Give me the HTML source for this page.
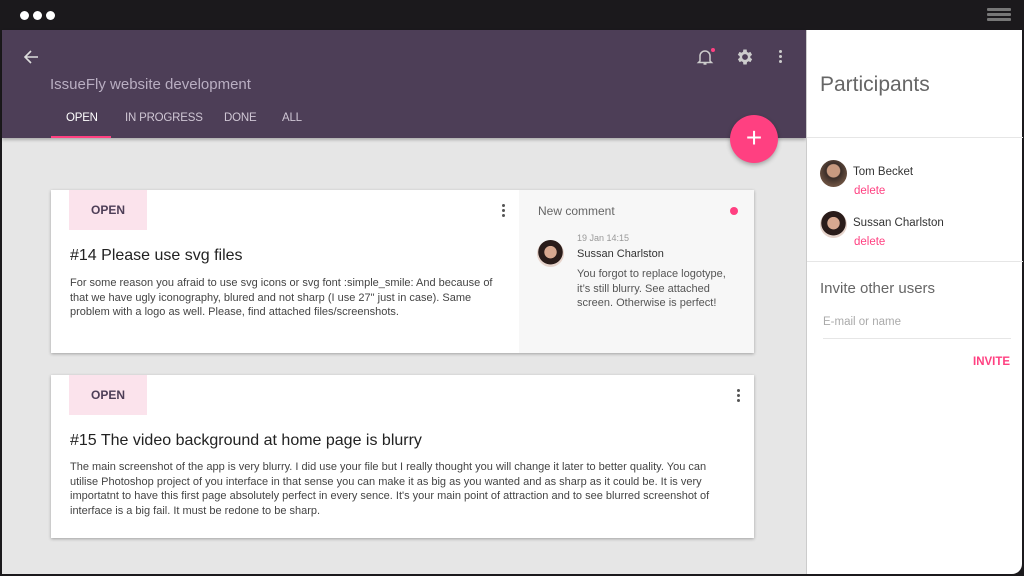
<!DOCTYPE html>
<html><head><style>
*{margin:0;padding:0;box-sizing:border-box}
body{width:1024px;height:576px;overflow:hidden;background:#1b191c;font-family:"Liberation Sans",sans-serif;position:relative}
.abs{position:absolute}
.main{left:2px;top:30px;width:804px;height:544px;background:#e6e6e6}
.hdr{left:2px;top:30px;width:804px;height:108px;background:#4d3e57;box-shadow:0 2px 3px rgba(0,0,0,.25)}
.side{left:806px;top:30px;width:216px;height:544px;background:#fff;border-left:1px solid #ccc;border-radius:0 0 10px 0}
.card{background:#fff;box-shadow:0 1px 3px rgba(0,0,0,.3);left:51px;width:703px;height:163px}
.tag{left:18px;top:0;width:78px;height:40px;background:#fbe3ec;color:#4d3e57;font-weight:bold;font-size:12px;line-height:40px;text-align:center}
.title{left:19px;font-size:16px;color:#222}
.txt{left:19px;font-size:11px;color:#444;line-height:14.5px}
.dots{width:3px;height:3px;background:#555;border-radius:50%;box-shadow:0 5px 0 #555,0 10px 0 #555}
.tab{top:112px;font-size:11.5px;color:#cfc6d4;letter-spacing:-.2px}
</style></head><body>
<div class="abs" style="left:20px;top:11px;width:9px;height:9px;border-radius:50%;background:#fff;box-shadow:13px 0 0 #fff,26px 0 0 #fff"></div>
<div class="abs" style="left:987px;top:8px;width:24px;height:3px;background:#777;box-shadow:0 5px 0 #777,0 10px 0 #777;border-radius:1px"></div>
<div class="abs main"></div>
<div class="abs hdr"></div>
<svg class="abs" style="left:22px;top:48px" width="18" height="18" viewBox="0 0 18 18"><path d="M16 9H3M9 3L3 9l6 6" stroke="#ddd" stroke-width="1.6" fill="none"/></svg>
<div class="abs" style="left:50px;top:76px;color:#b9aec2;font-size:15px">IssueFly website development</div>
<div class="abs tab" style="left:66px;color:#fff">OPEN</div>
<div class="abs tab" style="left:125px">IN PROGRESS</div>
<div class="abs tab" style="left:224px">DONE</div>
<div class="abs tab" style="left:282px">ALL</div>
<div class="abs" style="left:51px;top:136px;width:60px;height:2px;background:#ff4081"></div>
<svg class="abs" style="left:695px;top:47px" width="20" height="20" viewBox="0 0 20 20"><path d="M5 14V9a5 5 0 0 1 10 0v5l1.5 1.5h-13z M8.5 17h3" stroke="#ccc" stroke-width="1.5" fill="none"/></svg>
<div class="abs" style="left:711px;top:48px;width:4px;height:4px;border-radius:50%;background:#ff4081"></div>
<svg class="abs" style="left:735px;top:47px" width="20" height="20" viewBox="0 0 24 24"><path fill="#ccc" d="M19.4 13a7.6 7.6 0 0 0 0-2l2.1-1.6-2-3.5-2.5 1a7 7 0 0 0-1.7-1L15 3h-4l-.4 2.9a7 7 0 0 0-1.7 1l-2.5-1-2 3.5L6.6 11a7.6 7.6 0 0 0 0 2l-2.1 1.6 2 3.5 2.5-1a7 7 0 0 0 1.7 1L11 21h4l.4-2.9a7 7 0 0 0 1.7-1l2.5 1 2-3.5zM13 15.5A3.5 3.5 0 1 1 13 8.5a3.5 3.5 0 0 1 0 7z" transform="translate(-1 0)"/></svg>
<div class="abs dots" style="left:779px;top:50px;background:#ccc;box-shadow:0 5px 0 #ccc,0 10px 0 #ccc"></div>
<div class="abs" style="left:730px;top:115px;width:48px;height:48px;border-radius:50%;background:#ff4081;box-shadow:0 2px 5px rgba(0,0,0,.3);color:#fff;font-size:28px;line-height:46px;text-align:center">+</div>

<div class="abs card" style="top:190px">
<div class="abs tag">OPEN</div>
<div class="abs dots" style="left:451px;top:14px"></div>
<div class="abs title" style="top:57px">#14 Please use svg files</div>
<div class="abs txt" style="top:86px;width:440px">For some reason you afraid to use svg icons or svg font :simple_smile: And because of that we have ugly iconography, blured and not sharp (I use 27" just in case). Same problem with a logo as well. Please, find attached files/screenshots.</div>
<div class="abs" style="left:468px;top:0;width:235px;height:163px;background:#f7f7f7">
<div class="abs" style="left:19px;top:14px;font-size:12px;color:#666">New comment</div>
<div class="abs" style="left:211px;top:17px;width:8px;height:8px;border-radius:50%;background:#ff4081"></div>
<div class="abs" style="left:18px;top:50px;width:27px;height:27px;border-radius:50%;background:radial-gradient(circle at 50% 45%,#d8a890 30%,#2a1c1a 32%,#2a1c1a 60%,#e6d4cc 62%)"></div>
<div class="abs" style="left:58px;top:43px;font-size:9px;color:#999">19 Jan 14:15</div>
<div class="abs" style="left:58px;top:58px;font-size:11px;color:#333">Sussan Charlston</div>
<div class="abs" style="left:58px;top:77px;font-size:11px;color:#555;line-height:14.5px;width:160px">You forgot to replace logotype, it’s still blurry. See attached screen. Otherwise is perfect!</div>
</div>
</div>

<div class="abs card" style="top:375px">
<div class="abs tag">OPEN</div>
<div class="abs dots" style="left:686px;top:14px"></div>
<div class="abs title" style="top:57px">#15 The video background at home page is blurry</div>
<div class="abs txt" style="top:85px;width:665px">The main screenshot of the app is very blurry. I did use your file but I really thought you will change it later to better quality. You can utilise Photoshop project of you interface in that sense you can make it as big as you wanted and as sharp as it could be. It is very importatnt to have this first page absolutely perfect in every sence. It's your main point of attraction and to see blurred screenshot of interface is a big fail. It must be redone to be sharp.</div>
</div>

<div class="abs side">
<div class="abs" style="left:13px;top:43px;font-size:21px;color:#666">Participants</div>
<div class="abs" style="left:0;top:107px;width:216px;height:1px;background:#e6e6e6"></div>
<div class="abs" style="left:13px;top:130px;width:27px;height:27px;border-radius:50%;background:radial-gradient(circle at 50% 40%,#c89a80 30%,#3a2d28 34%,#6a5040 70%)"></div>
<div class="abs" style="left:46px;top:136px;font-size:11.5px;color:#333">Tom Becket</div>
<div class="abs" style="left:47px;top:155px;font-size:11.5px;color:#ff4081">delete</div>
<div class="abs" style="left:13px;top:181px;width:27px;height:27px;border-radius:50%;background:radial-gradient(circle at 50% 45%,#d8a890 30%,#2a1c1a 32%,#2a1c1a 60%,#e6d4cc 62%)"></div>
<div class="abs" style="left:46px;top:187px;font-size:11.5px;color:#333">Sussan Charlston</div>
<div class="abs" style="left:47px;top:206px;font-size:11.5px;color:#ff4081">delete</div>
<div class="abs" style="left:0;top:231px;width:216px;height:1px;background:#e6e6e6"></div>
<div class="abs" style="left:13px;top:250px;font-size:15px;color:#666">Invite other users</div>
<div class="abs" style="left:16px;top:286px;font-size:11.5px;color:#aaa">E-mail or name</div>
<div class="abs" style="left:16px;top:308px;width:188px;height:1px;background:#e6e6e6"></div>
<div class="abs" style="left:166px;top:326px;font-size:11.5px;color:#ff4081;font-weight:bold">INVITE</div>
</div>
</body></html>
